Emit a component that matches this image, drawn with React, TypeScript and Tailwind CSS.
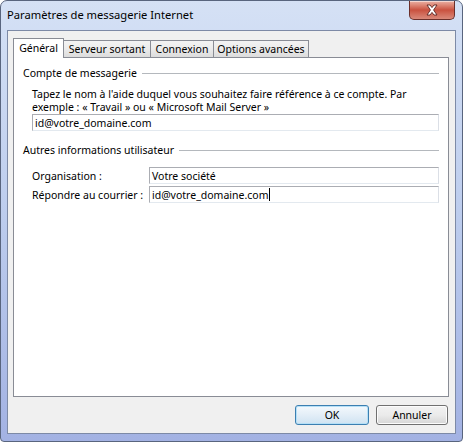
const tabs = [
  { label: "Général", w: "w-[51px]", active: true },
  { label: "Serveur sortant", w: "w-[88px]", active: false },
  { label: "Connexion", w: "w-[64px]", active: false },
  { label: "Options avancées", w: "w-[96px]", active: false },
];

const GroupTitle = ({ text }: { text: string }) => (
  <div className="flex h-[14px] items-center gap-[5px] pl-[9px] pr-[9px]">
    <span className="whitespace-nowrap">{text}</span>
    <div className="h-px flex-1 bg-[#b4b8bd]" />
  </div>
);

const Field = ({ value, caret, className }: { value: string; caret?: boolean; className?: string }) => (
  <div
    className={`flex h-[17px] items-center border border-[#abadb3] border-r-[#dbdfe6] border-b-[#e3e9ef] bg-white px-[2px] ${className ?? ""}`}
  >
    <span className="whitespace-nowrap">{value}</span>
    {caret && <span className="ml-px inline-block h-[13px] w-px bg-black" />}
  </div>
);

const CloseButton = () => (
  <div className="flex h-[19px] w-[46px] items-center justify-center rounded-b-[5px] border border-t-0 border-[#6b2f2a] bg-gradient-to-b from-[#eab1a4] via-[#c9513f] to-[#d9897a] shadow-[inset_0_1px_0_rgba(255,255,255,0.5)]">
    <svg width="14" height="12" viewBox="0 0 14 12">
      <path
        d="M2 1 L5 1 L7 3.6 L9 1 L12 1 L8.6 6 L12 11 L9 11 L7 8.4 L5 11 L2 11 L5.4 6 Z"
        fill="#ffffff"
        stroke="#5a2420"
        strokeWidth="0.9"
        strokeLinejoin="round"
      />
    </svg>
  </div>
);

export default function App() {
  return (
    <div className="h-[442px] w-[463px] bg-white font-['Noto_Sans',sans-serif] text-[10.5px] leading-[12px] text-black">
      <div className="flex h-full w-full flex-col rounded-t-[7px] rounded-b-[4px] border border-[#59657e] bg-gradient-to-b from-[#d5e1f5] via-[#bccced] to-[#a3b2e3]">
        {/* title bar */}
        <div className="flex h-[29px] items-start justify-between pl-[6px] pr-[7px]">
          <span className="mt-[7px] text-[11.2px] leading-[14px] text-black">Paramètres de messagerie Internet</span>
          <CloseButton />
        </div>

        {/* client area */}
        <div className="mx-[6px] mb-[7px] flex flex-1 flex-col border border-[#7d8aa6] bg-[#f0f0f0] pl-[5px] pr-[6px]">
          {/* tab strip */}
          <div className="mt-[6px] flex h-[20px] items-end">
            {tabs.map((t) =>
              t.active ? (
                <div
                  key={t.label}
                  className={`${t.w} relative z-10 -mb-px flex h-[20px] items-start justify-center border border-b-0 border-[#898c95] bg-white pt-[3px]`}
                >
                  {t.label}
                </div>
              ) : (
                <div
                  key={t.label}
                  className={`${t.w} -ml-px flex h-[17px] items-center justify-center border border-b-0 border-[#898c95] bg-gradient-to-b from-[#f3f3f3] via-[#ebebeb] to-[#dcdcdc] first:ml-0`}
                >
                  {t.label}
                </div>
              )
            )}
          </div>

          {/* tab pane */}
          <div className="flex h-[340px] flex-col border border-[#898c95] bg-white pt-[8px]">
            <GroupTitle text="Compte de messagerie" />
            <div className="pl-[18px] pr-[9px]">
              <p className="mt-[8px] leading-[13px]">
                Tapez le nom à l'aide duquel vous souhaitez faire référence à ce compte. Par
                <br />
                exemple : « Travail » ou « Microsoft Mail Server »
              </p>
              <Field value="id@votre_domaine.com" />
            </div>

            <div className="mt-[12px]">
              <GroupTitle text="Autres informations utilisateur" />
            </div>
            <div className="mt-[10px] flex flex-col gap-[2px] pl-[18px] pr-[9px]">
              <div className="flex items-center">
                <span className="w-[117px]">Organisation :</span>
                <Field value="Votre société" className="flex-1" />
              </div>
              <div className="flex items-center">
                <span className="w-[117px]">Répondre au courrier :</span>
                <Field value="id@votre_domaine.com" caret className="flex-1" />
              </div>
            </div>
          </div>

          {/* buttons */}
          <div className="mt-[8px] flex justify-end gap-[7px] pr-px">
            <button className="h-[20px] w-[74px] rounded-[3px] border border-[#3c7fb1] bg-gradient-to-b from-[#f4f9fd] via-[#e3eef7] to-[#cfe3f2] shadow-[inset_0_0_0_1px_#b5e0f7]">
              OK
            </button>
            <button className="h-[20px] w-[72px] rounded-[3px] border border-[#707070] bg-gradient-to-b from-[#f2f2f2] via-[#ebebeb] to-[#d6d6d6] shadow-[inset_0_0_0_1px_#fcfcfc]">
              Annuler
            </button>
          </div>
        </div>
      </div>
    </div>
  );
}
